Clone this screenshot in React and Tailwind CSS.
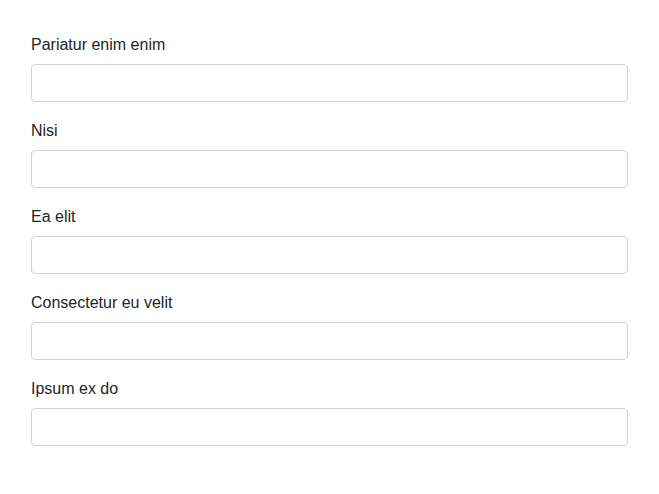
export default function App() {
  const labels = ["Pariatur enim enim", "Nisi", "Ea elit", "Consectetur eu velit", "Ipsum ex do"];
  return (
    <div className="bg-white min-h-[494px] w-full px-[31px] pt-[32px] text-[#212529]" style={{ fontFamily: "'Liberation Sans', Arial, sans-serif" }}>
      {labels.map((l) => (
        <div key={l} className="mb-[16px]">
          <label className="block text-[16px] leading-[24px] pt-[1px] mb-[7px]">{l}</label>
          <input type="text" className="block w-full h-[38px] border border-[#ced4da] rounded-[4px] px-3 bg-white outline-none" />
        </div>
      ))}
    </div>
  );
}
